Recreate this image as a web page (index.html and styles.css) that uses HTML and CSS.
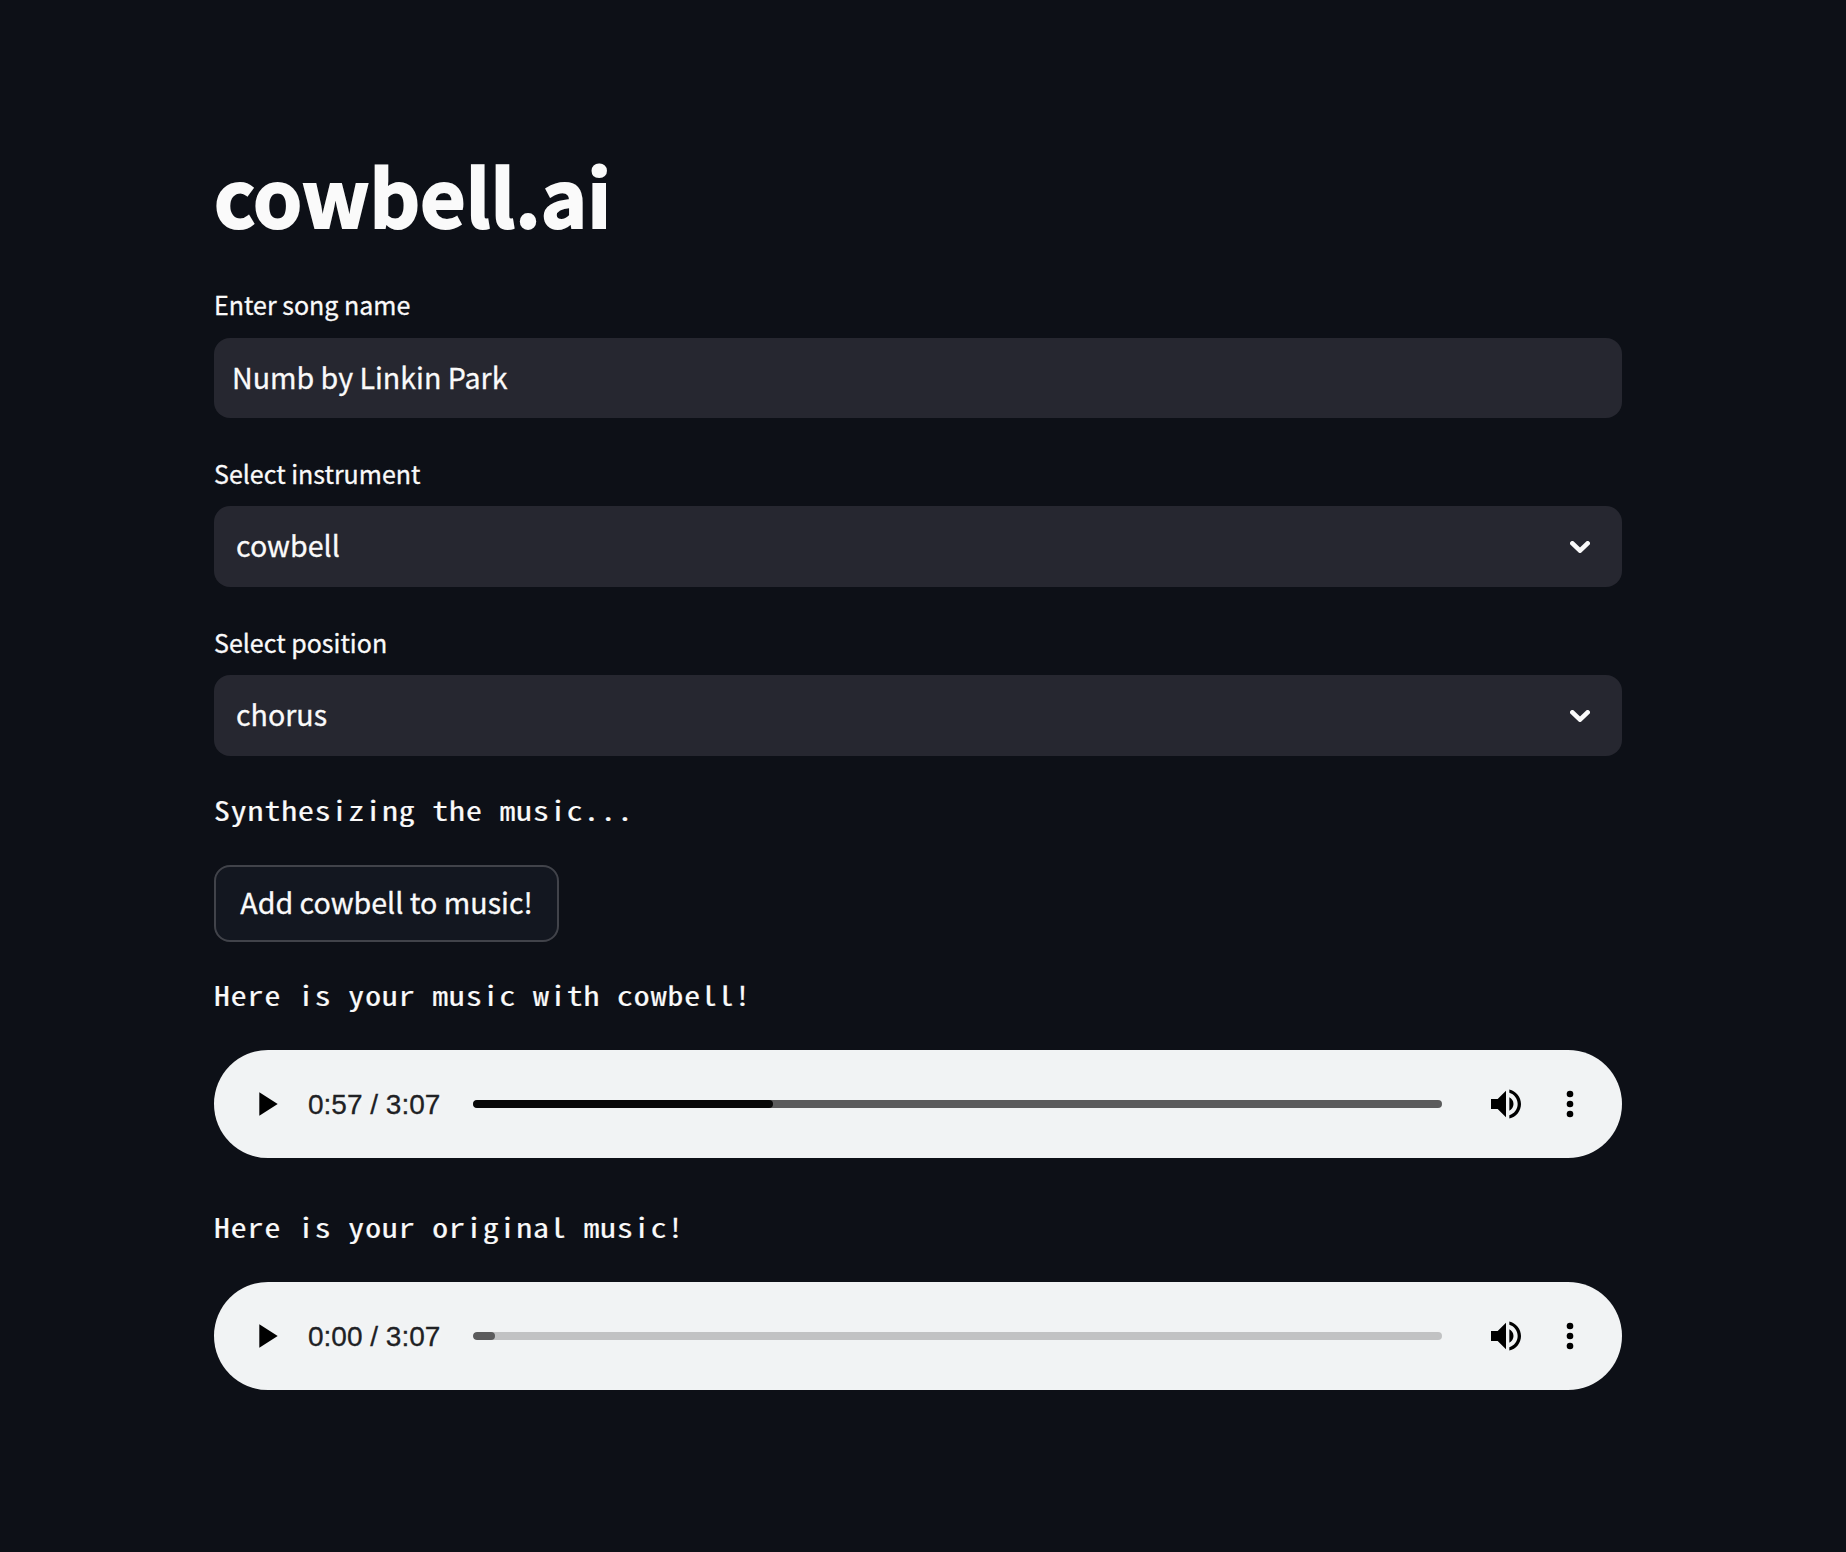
FILE: index.html
```html
<!DOCTYPE html>
<html lang="en">
<head>
    <meta charset="UTF-8">
    <meta name="viewport" content="width=device-width, initial-scale=1.0">
    <title>cowbell.ai</title>
    <link rel="stylesheet" href="styles.css">
</head>
<body>

    <main class="container">
        <h1>cowbell.ai</h1>

        <div class="field">
            <label class="label" for="song">Enter song name</label>
            <input class="text-input" id="song" type="text" value="Numb by Linkin Park">
        </div>

        <div class="field">
            <div class="label">Select instrument</div>
            <div class="select">
                <span>cowbell</span>
                <svg class="chevron" viewBox="0 0 20 12"><path d="M2.4 2.4l7.6 7.2 7.6-7.2"/></svg>
            </div>
        </div>

        <div class="field">
            <div class="label">Select position</div>
            <div class="select">
                <span>chorus</span>
                <svg class="chevron" viewBox="0 0 20 12"><path d="M2.4 2.4l7.6 7.2 7.6-7.2"/></svg>
            </div>
        </div>

        <div class="status">Synthesizing the music...</div>

        <button class="button" type="button">Add cowbell to music!</button>

        <div class="status result">Here is your music with cowbell!</div>
        <div class="audio">
            <svg class="icon" viewBox="0 0 24 24"><path d="M8 5v14l11-7z"/></svg>
            <span class="time">0:57 / 3:07</span>
            <div class="track loaded"><div class="played" style="width: 31%"></div></div>
            <svg class="icon volume" viewBox="0 0 24 24"><path d="M3 9v6h4l5 5V4L7 9H3zm13.5 3c0-1.77-1.02-3.29-2.5-4.03v8.05c1.48-.73 2.5-2.25 2.5-4.02zM14 3.23v2.06c2.89.86 5 3.54 5 6.71s-2.11 5.85-5 6.71v2.06c4.01-.91 7-4.49 7-8.77s-2.99-7.86-7-8.77z"/></svg>
            <svg class="icon" viewBox="0 0 24 24"><circle cx="12" cy="6" r="2"/><circle cx="12" cy="12" r="2"/><circle cx="12" cy="18" r="2"/></svg>
        </div>

        <div class="status result">Here is your original music!</div>
        <div class="audio">
            <svg class="icon" viewBox="0 0 24 24"><path d="M8 5v14l11-7z"/></svg>
            <span class="time">0:00 / 3:07</span>
            <div class="track"><div class="buffered" style="width: 2.3%"></div></div>
            <svg class="icon volume" viewBox="0 0 24 24"><path d="M3 9v6h4l5 5V4L7 9H3zm13.5 3c0-1.77-1.02-3.29-2.5-4.03v8.05c1.48-.73 2.5-2.25 2.5-4.02zM14 3.23v2.06c2.89.86 5 3.54 5 6.71s-2.11 5.85-5 6.71v2.06c4.01-.91 7-4.49 7-8.77s-2.99-7.86-7-8.77z"/></svg>
            <svg class="icon" viewBox="0 0 24 24"><circle cx="12" cy="6" r="2"/><circle cx="12" cy="12" r="2"/><circle cx="12" cy="18" r="2"/></svg>
        </div>
    </main>

</body>
</html>
```
FILE: styles.css
```css
* {
    box-sizing: border-box;
}
body {
    background-color: #0d1017;
    color: #fafafa;
    font-family: 'Noto Sans CJK SC', sans-serif;
    margin: 0;
    min-height: 1552px;
}
.container {
    width: 1408px;
    margin-left: 214px;
    padding-top: 141px;
    display: flex;
    flex-direction: column;
}
h1 {
    font-size: 78.6px;
    font-weight: 700;
    line-height: 106px;
    margin: 0 0 36px;
    -webkit-text-stroke: 2px #fafafa;
}
.field {
    margin-bottom: 35px;
}
.label {
    display: block;
    font-size: 25px;
    line-height: 42px;
    height: 42px;
    margin-bottom: 13px;
    -webkit-text-stroke: 0.3px #fafafa;
}
.text-input,
.select {
    width: 100%;
    height: 81px;
    border: 0;
    border-radius: 16px;
    background-color: #262730;
    color: #fafafa;
    font-family: inherit;
    font-size: 28.6px;
    -webkit-text-stroke: 0.3px #fafafa;
}
.text-input {
    display: block;
    height: 80px;
    padding: 0 18px 3px;
    outline: none;
}
.select {
    display: flex;
    align-items: center;
    justify-content: space-between;
    padding: 0 32px 0 22px;
}
.select span {
    padding-bottom: 4px;
}
.field + .field .label {
    height: 41px;
    line-height: 41px;
    margin-bottom: 12px;
}
.chevron {
    width: 20px;
    height: 12px;
    fill: none;
    stroke: #fafafa;
    stroke-width: 4.7;
    stroke-linecap: round;
    stroke-linejoin: round;
}
.status {
    align-self: flex-start;
    font-family: 'Noto Sans Mono CJK SC', 'DejaVu Sans Mono', monospace;
    font-size: 26.4px;
    line-height: 37px;
    height: 42px;
    letter-spacing: 0.8px;
    white-space: pre;
    transform: scaleX(1.2);
    transform-origin: left;
    -webkit-text-stroke: 0.2px #fafafa;
}
.status.result {
    line-height: 40px;
}
.button {
    align-self: flex-start;
    width: 345px;
    height: 77px;
    margin: 32px 0 33px;
    padding: 0 0 4px;
    border: 2px solid #41434a;
    border-radius: 16px;
    background-color: #131720;
    color: #fafafa;
    font-family: inherit;
    font-size: 28.6px;
    -webkit-text-stroke: 0.3px #fafafa;
}
.audio {
    display: flex;
    align-items: center;
    height: 108px;
    margin: 33px 0 49px;
    padding: 0 32px;
    border-radius: 54px;
    background-color: #f1f3f4;
    color: #202124;
}
.icon {
    flex: none;
    width: 40px;
    height: 40px;
    fill: #000;
}
.time {
    width: 165px;
    margin-left: 22px;
    padding-top: 1px;
    font-family: 'Liberation Sans', Arial, sans-serif;
    font-size: 28px;
    white-space: nowrap;
    text-shadow: 0 0 10px rgba(255, 255, 255, 0.7);
    -webkit-text-stroke: 0.3px #202124;
}
.track {
    flex: 1;
    height: 8px;
    border-radius: 4px;
    background-color: #c1c2c3;
    overflow: hidden;
}
.track.loaded {
    background-color: #5b5b5c;
}
.played,
.buffered {
    height: 100%;
    border-radius: 4px;
    background-color: #080808;
}
.buffered {
    background-color: #5b5b5c;
}
.volume {
    margin: 0 24px 0 44px;
}
```
